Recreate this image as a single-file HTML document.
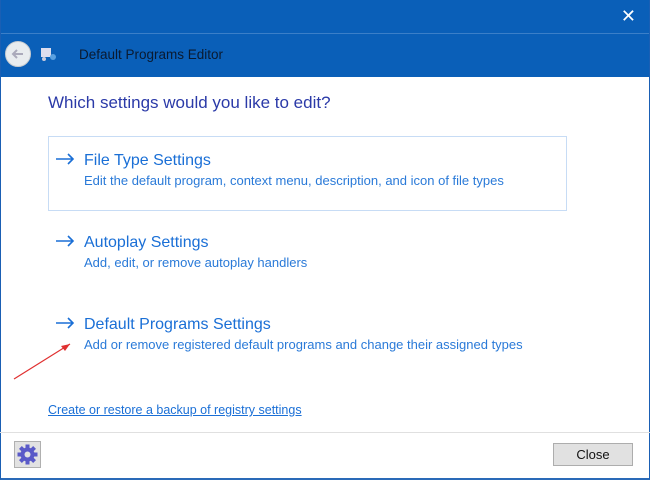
<!DOCTYPE html>
<html><head><meta charset="utf-8"><style>
*{margin:0;padding:0;box-sizing:border-box}
body{width:650px;height:480px;overflow:hidden;background:#fff;font-family:"Liberation Sans",sans-serif;position:relative}
.win{position:absolute;left:0;top:0;width:650px;height:480px;border:1px solid #1a5fb4;border-top:none;border-bottom:2px solid #2a6ab8}
.top{position:absolute;left:0;top:0;width:650px;height:77px;background:#0a5fb8}
.line{position:absolute;left:0;top:33px;width:650px;height:1px;background:#3b7fc8}
.x{position:absolute;right:14px;top:6px;color:#fff;font-size:18px}
.back{position:absolute;left:5px;top:41px;width:26px;height:26px;border-radius:50%;background:#e8ecef;border:1px solid #c8ccd0}
.title{position:absolute;left:79px;top:47px;font-size:13.5px;color:#0a1a30}
h1{position:absolute;left:48px;top:93px;font-size:17px;font-weight:normal;color:#2b3aa8}
.box{position:absolute;left:48px;top:136px;width:519px;height:75px;border:1px solid #c7dcf5}
.it{position:absolute;left:55px;color:#1a6fd6}
.it .t{font-size:16px}
.it .d{font-size:13px;margin-left:29px;margin-top:3px;color:#2a7ad8}
.arr{display:inline-block;width:20px;margin-right:9px}
.link{position:absolute;left:48px;top:403px;font-size:12.5px;color:#1a6fd6;text-decoration:underline}
.foot{position:absolute;left:0;top:432px;width:650px;height:1px;background:#e0e0e0}
.gear{position:absolute;left:14px;top:441px;width:27px;height:27px;background:#e2e2e2;border:1px solid #b0b0b0}
.close{position:absolute;left:553px;top:443px;width:80px;height:23px;background:#e1e1e1;border:1px solid #adadad;font-size:13px;text-align:center;line-height:21px;color:#111}
</style></head><body>
<div class="top"><div class="line"></div><div class="x">✕</div>
<div class="back"><svg width="24" height="24" viewBox="0 0 24 24"><path d="M17 12H7M11 8l-4 4 4 4" stroke="#aab" stroke-width="2" fill="none"/></svg></div>
<svg style="position:absolute;left:40px;top:46px" width="18" height="16"><rect x="1" y="2" width="10" height="9" fill="#dde"/><circle cx="4" cy="13" r="2" fill="#ccd"/><circle cx="13" cy="11" r="3" fill="#5aa0e0"/></svg>
<div class="title">Default Programs Editor</div></div>
<div class="win"></div>
<h1>Which settings would you like to edit?</h1>
<div class="box"></div>
<div class="it" style="top:152px"><div class="t"><svg class="arr" width="20" height="12" viewBox="0 0 20 12"><path d="M1 6h17M13 1l5 5-5 5" stroke="#1a6fd6" stroke-width="1.6" fill="none"/></svg>File Type Settings</div><div class="d">Edit the default program, context menu, description, and icon of file types</div></div>
<div class="it" style="top:234px"><div class="t"><svg class="arr" width="20" height="12" viewBox="0 0 20 12"><path d="M1 6h17M13 1l5 5-5 5" stroke="#1a6fd6" stroke-width="1.6" fill="none"/></svg>Autoplay Settings</div><div class="d">Add, edit, or remove autoplay handlers</div></div>
<div class="it" style="top:316px"><div class="t"><svg class="arr" width="20" height="12" viewBox="0 0 20 12"><path d="M1 6h17M13 1l5 5-5 5" stroke="#1a6fd6" stroke-width="1.6" fill="none"/></svg>Default Programs Settings</div><div class="d">Add or remove registered default programs and change their assigned types</div></div>
<svg style="position:absolute;left:10px;top:338px" width="65" height="45"><path d="M4 41L60 6" stroke="#e03030" stroke-width="1.2"/><path d="M60 6l-9 2 4 5z" fill="#e03030"/></svg>
<div class="link">Create or restore a backup of registry settings</div>
<div class="foot"></div>
<div class="gear"><svg width="25" height="25" viewBox="0 0 25 25"><g transform="translate(12.5 12.5)" fill="#5a5ac8"><circle r="7"/><rect x="-2" y="-10" width="4" height="20"/><rect x="-10" y="-2" width="20" height="4"/><rect x="-2" y="-10" width="4" height="20" transform="rotate(45)"/><rect x="-2" y="-10" width="4" height="20" transform="rotate(-45)"/><circle r="3" fill="#e2e2e2"/></g></svg></div>
<div class="close">Close</div>
</body></html>
